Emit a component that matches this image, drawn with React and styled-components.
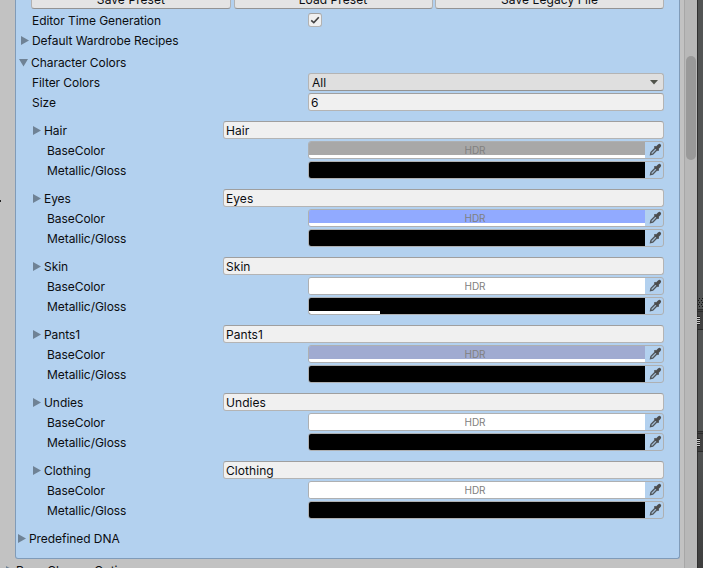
import React from "react";
import styled, { createGlobalStyle } from "styled-components";

const Global = createGlobalStyle`
  * { box-sizing: border-box; }
  html, body { margin: 0; height: 568px; overflow: hidden; background: #c2c2c2; }
  body { font: 12px/20px Inter, "Liberation Sans", sans-serif; color: #0b0d10; letter-spacing: -0.06px; }
`;

const Editor = styled.div`
  display: flex;
  width: 703px;
  height: 568px;
  overflow: hidden;
  background: #c2c2c2;
`;

const Inspector = styled.main`
  position: relative;
  width: 684px;
  flex: none;
`;

const Panel = styled.section`
  width: 665px;
  height: 559px;
  margin-left: 15px;
  padding-right: 15px;
  background: #b3d1ef;
  border: 1px solid #809bb8;
  border-top: 0;
  border-radius: 0 0 3px 3px;
`;

const ButtonBar = styled.div`
  display: flex;
  justify-content: space-between;
  height: 11px;
  width: 633px;
  margin-left: 15px;
`;

const Button = styled.button`
  width: ${(p) => p.$width}px;
  height: 9px;
  padding: 0;
  display: flex;
  align-items: flex-end;
  justify-content: center;
  font: inherit;
  letter-spacing: 0.08px;
  line-height: 16px;
  color: inherit;
  background: #e4e4e4;
  border: 1px solid #b2b2b2;
  border-top: 0;
  border-bottom-color: #939393;
  border-radius: 0 0 3px 3px;
`;

const Row = styled.div`
  display: flex;
  align-items: flex-start;
  height: 20px;
  margin-top: ${(p) => p.$gap || 0}px;
  padding-left: ${(p) => p.$indent}px;
`;

const Label = styled.span`
  flex: 1;
  white-space: nowrap;
`;

const Fold = styled.svg`
  flex: none;
  width: 9px;
  height: 9px;
  margin-top: 5px;
  margin-right: ${(p) => p.$space || 3}px;
  fill: #6f8295;
`;

const Field = styled.div`
  flex: none;
  width: ${(p) => (p.$wide ? 441 : 356)}px;
  height: 18px;
  padding: 0 2px;
  line-height: 17px;
  border: 1px solid #b4b4b4;
  border-top-color: #9f9f9f;
  border-radius: 3px;
  background: #f0f0f0;
  letter-spacing: 0.06px;
`;

const Select = styled(Field)`
  display: flex;
  align-items: center;
  justify-content: space-between;
  padding: 0 5px 0 3px;
  background: #dfdfdf;
  border-color: #b4b4b4;
  border-bottom-color: #939393;
`;

const CheckCell = styled.div`
  flex: none;
  width: 356px;
  padding-top: 2px;
`;

const Check = styled.div`
  width: 14px;
  height: 14px;
  border: 1px solid #b2b2b2;
  border-top-color: #a0a0a0;
  border-radius: 3px;
  background: #f0f0f0;
  svg { display: block; }
`;

const ColorField = styled.div`
  flex: none;
  display: flex;
  width: 356px;
  height: 18px;
  border: 1px solid #aeb0b2;
  border-radius: 3px;
  overflow: hidden;
  > svg { flex: none; }
`;

const Swatch = styled.div`
  width: 336px;
  height: 16px;
  text-align: center;
  font-size: 10px;
  line-height: 17px;
  letter-spacing: 0;
  padding-right: 4px;
  color: #808080;
  background:
    linear-gradient(#fff, #fff) left bottom / ${(p) => p.$alpha}px 3px no-repeat,
    ${(p) => p.$color};
`;

const Below = styled.div`
  display: flex;
  height: 20px;
  padding: 2px 0 0 5px;
`;

const EdgeDot = styled.i`
  position: absolute;
  left: 0;
  top: 200px;
  width: 1px;
  height: 2px;
  background: #222;
`;

const Scrollbar = styled.div`
  flex: none;
  width: 13px;
  padding: 56px 1px 0;
  background: #b8b8b8;
  border-left: 1px solid #a7a7a7;
`;

const Thumb = styled.div`
  width: 10px;
  height: 104px;
  border-radius: 5px;
  background: #999;
`;

const Edge = styled.svg`
  flex: none;
  display: block;
`;

function Foldout({ open, space }) {
  return (
    <Fold viewBox="0 0 9 9" $space={space}>
      <path d={open ? "M0 1H9L4.5 8.5Z" : "M1 0L9 4.5L1 9Z"} />
    </Fold>
  );
}

function Dropper() {
  return (
    <svg width="18" height="16" viewBox="0 0 18 16">
      <path d="M5.5 12.6L6 10.3L10.6 5.7L12.4 7.5L7.8 12.1L5.5 12.6Z" fill="#a0b8cf" stroke="#50565b" strokeWidth="1.3" />
      <path d="M8.8 4.9L10 3.8L11 4.4L13 2.5Q14.6 1.3 15.7 2.4Q16.7 3.6 15.5 5L13.6 6.9L14.2 8L13 9.2Z" fill="#4c4d4e" />
    </svg>
  );
}

function ColorRow({ label, color, alpha, hdr }) {
  return (
    <Row $indent={31}>
      <Label>{label}</Label>
      <ColorField>
        <Swatch $color={color} $alpha={alpha}>{hdr ? "HDR" : ""}</Swatch>
        <Dropper />
      </ColorField>
    </Row>
  );
}

const colors = [
  { name: "Hair", base: "#a8a8a8", gloss: 0 },
  { name: "Eyes", base: "#91aaff", gloss: 0 },
  { name: "Skin", base: "#ffffff", gloss: 71 },
  { name: "Pants1", base: "#a0abd1", gloss: 0 },
  { name: "Undies", base: "#ffffff", gloss: 0 },
  { name: "Clothing", base: "#ffffff", gloss: 0 },
];

function DockTab({ y }) {
  return (
    <g>
      <rect x="1" y={y} width="5" height="20" fill="#414141" />
      <rect y={y} width="6" height="1" fill="#2b2b2b" />
      <rect y={y + 2} width="6" height="1" fill="#2b2b2b" />
      <rect y={y + 20} width="6" height="1" fill="#2b2b2b" />
      <rect y={y + 7} width="3" height="9" fill="#222" />
      {[8, 10, 12, 14].map((d) => (
        <rect key={d} y={y + d} width="3" height="1" fill="#c8c8c8" />
      ))}
    </g>
  );
}

export default function App() {
  return (
    <Editor>
      <Global />
      <Inspector>
        <Panel>
          <ButtonBar>
            <Button $width={200}>Save Preset</Button>
            <Button $width={199}>Load Preset</Button>
            <Button $width={229}>Save Legacy File</Button>
          </ButtonBar>
          <Row $indent={16}>
            <Label>Editor Time Generation</Label>
            <CheckCell>
              <Check>
                <svg width="12" height="12" viewBox="0 0 12 12">
                  <path d="M2.2 6.3L4.8 8.6L9.8 3.2" fill="none" stroke="#424242" strokeWidth="1.6" />
                </svg>
              </Check>
            </CheckCell>
          </Row>
          <Row $indent={4}><Foldout /><Label>Default Wardrobe Recipes</Label></Row>
          <Row $indent={3} $gap={2}><Foldout open /><Label>Character Colors</Label></Row>
          <Row $indent={16}>
            <Label>Filter Colors</Label>
            <Select>
              All
              <svg width="8" height="5" viewBox="0 0 8 5"><path d="M0 0H8L4 4.5Z" fill="#50534b" /></svg>
            </Select>
          </Row>
          <Row $indent={16}><Label>Size</Label><Field>6</Field></Row>
          {colors.map((c) => (
            <React.Fragment key={c.name}>
              <Row $indent={16} $gap={8}>
                <Foldout />
                <Label>{c.name}</Label>
                <Field $wide>{c.name}</Field>
              </Row>
              <ColorRow label="BaseColor" color={c.base} alpha={336} hdr />
              <ColorRow label="Metallic/Gloss" color="#000" alpha={c.gloss} />
            </React.Fragment>
          ))}
          <Row $indent={1} $gap={8}><Foldout /><Label>Predefined DNA</Label></Row>
        </Panel>
        <Below><Foldout space={2} /><Label>Race Change Options</Label></Below>
        <EdgeDot />
      </Inspector>
      <Scrollbar><Thumb /></Scrollbar>
      <Edge width="6" height="568" viewBox="0 0 6 568" shapeRendering="crispEdges">
        <defs>
          <linearGradient id="dockShade" x1="0" y1="0" x2="0" y2="1">
            <stop offset="0" stopColor="#505252" />
            <stop offset="1" stopColor="#3e3e3e" />
          </linearGradient>
          <pattern id="dither" width="3" height="4" patternUnits="userSpaceOnUse">
            <rect x="1" width="1" height="1" fill="#151515" />
            <rect x="2" y="2" width="1" height="1" fill="#151515" />
          </pattern>
        </defs>
        <rect width="6" height="568" fill="#525454" />
        <rect y="451" width="6" height="117" fill="url(#dockShade)" />
        <rect width="1" height="568" fill="#303030" />
        <rect x="1" y="298" width="5" height="10" fill="url(#dither)" />
        <DockTab y={309} />
        <DockTab y={431} />
      </Edge>
    </Editor>
  );
}
